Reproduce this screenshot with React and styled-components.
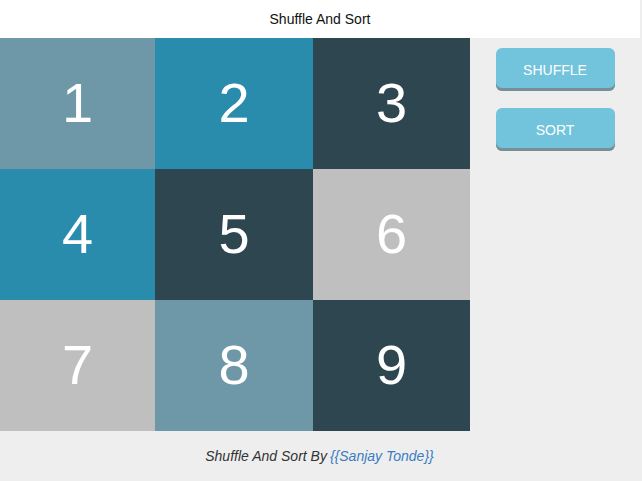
import React, { useState } from 'react'
import styled, { createGlobalStyle } from 'styled-components'

const colors = {
  slate: '#6e98a8',
  teal: '#2a8cad',
  dark: '#2e464f',
  grey: '#bfbfbf',
}

const initialCards = [
  { n: 1, color: colors.slate },
  { n: 2, color: colors.teal },
  { n: 3, color: colors.dark },
  { n: 4, color: colors.teal },
  { n: 5, color: colors.dark },
  { n: 6, color: colors.grey },
  { n: 7, color: colors.grey },
  { n: 8, color: colors.slate },
  { n: 9, color: colors.dark },
]

const App = () => {
  const [cards, setCards] = useState(initialCards)

  const shuffle = () => {
    const next = [...cards]
    for (let i = next.length - 1; i > 0; i--) {
      const j = Math.floor(Math.random() * (i + 1))
      ;[next[i], next[j]] = [next[j], next[i]]
    }
    setCards(next)
  }

  const sort = () => setCards([...cards].sort((a, b) => a.n - b.n))

  return (
    <Page>
      <GlobalStyle />
      <Header>Shuffle And Sort</Header>
      <Main>
        <Grid>
          {cards.map((card) => (
            <Card key={card.n} color={card.color}>{card.n}</Card>
          ))}
        </Grid>
        <Sidebar>
          <Button onClick={shuffle}>SHUFFLE</Button>
          <Button onClick={sort}>SORT</Button>
        </Sidebar>
      </Main>
      <Footer>
        Shuffle And Sort By <FooterLink href="#">{'{{Sanjay Tonde}}'}</FooterLink>
      </Footer>
    </Page>
  )
}

const GlobalStyle = createGlobalStyle`
  html, body {
    margin: 0;
    padding: 0;
    background: #eeeeee;
    font-family: "Liberation Sans", Arial, sans-serif;
  }
`

const Page = styled.div`
  display: flex;
  flex-direction: column;
  width: 642px;
  height: 481px;
  background: #eeeeee;
`

const Header = styled.header`
  height: 38px;
  margin-right: 2px;
  background: #ffffff;
  color: #111;
  font-size: 14px;
  display: flex;
  align-items: center;
  justify-content: center;
`

const Main = styled.div`
  display: flex;
  height: 393px;
`

const Grid = styled.div`
  display: grid;
  grid-template-columns: 155px 158px 157px;
  grid-template-rows: repeat(3, 131px);
  width: 470px;
`

const Card = styled.div`
  background: ${(props) => props.color};
  color: #ffffff;
  font-size: 56px;
  padding-bottom: 2px;
  display: flex;
  align-items: center;
  justify-content: center;
`

const Sidebar = styled.div`
  flex: 1;
  display: flex;
  flex-direction: column;
  align-items: center;
  gap: 17px;
  padding: 10px 2px 0 0;
`

const Button = styled.button`
  width: 119px;
  height: 43px;
  border: none;
  border-radius: 6px;
  background: #72c3dc;
  box-shadow: inset 0 -3px 0 #788f97;
  padding: 0;
  color: #ffffff;
  font-family: "Liberation Sans", Arial, sans-serif;
  font-size: 14px;
  cursor: pointer;
`

const Footer = styled.footer`
  flex: 1;
  display: flex;
  align-items: center;
  justify-content: center;
  padding-right: 3px;
  font-size: 14px;
  font-style: italic;
  color: #333333;
  gap: 3px;
`

const FooterLink = styled.a`
  color: #3a7cc0;
  text-decoration: none;
`

export default App
